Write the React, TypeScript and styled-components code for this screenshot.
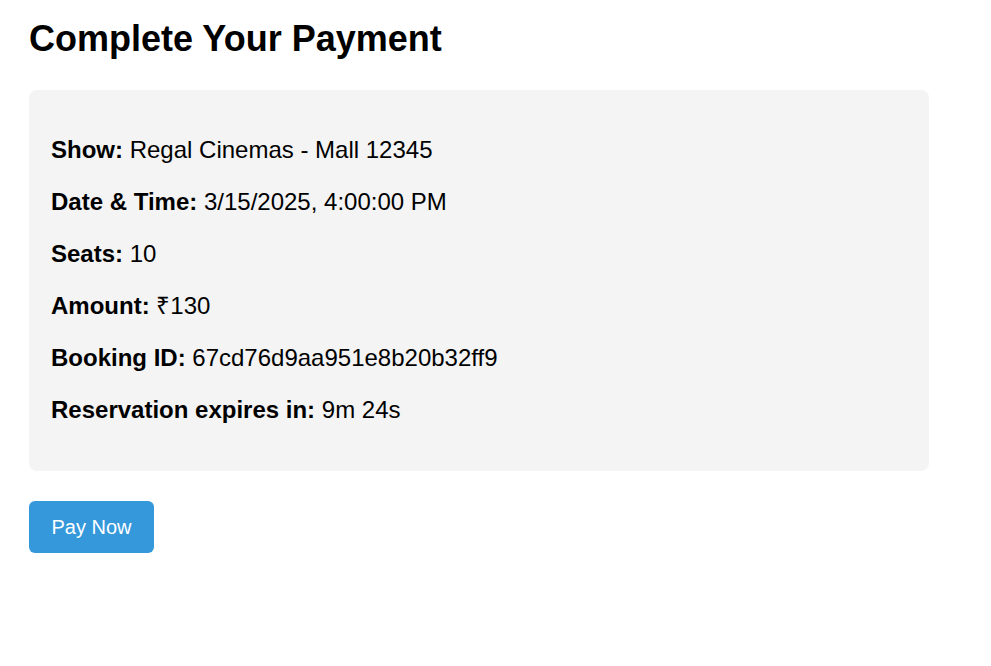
import React from "react";
import styled, { createGlobalStyle } from "styled-components";

const GlobalStyle = createGlobalStyle`
  html, body {
    margin: 0;
    padding: 0;
    background: #ffffff;
    font-family: "Liberation Sans", Arial, sans-serif;
    color: #000000;
  }
`;

const Page = styled.div`
  padding: 0 29px;
  display: flex;
  flex-direction: column;
  align-items: flex-start;
`;

const Title = styled.h1`
  font-size: 36px;
  font-weight: bold;
  margin: 18px 0 30px;
  line-height: 42px;
`;

const Card = styled.section`
  box-sizing: border-box;
  width: 900px;
  background: #f4f4f4;
  border-radius: 8px;
  padding: 24px 22px 25px;
`;

const Row = styled.p`
  margin: 20px 0;
  font-size: 24px;
  line-height: 32px;
`;

const Label = styled.strong`
  font-weight: bold;
`;

const PayButton = styled.button`
  margin-top: 30px;
  width: 125px;
  height: 52px;
  padding: 0;
  border: none;
  border-radius: 6px;
  background: #3498db;
  color: #ffffff;
  font-family: "Liberation Sans", Arial, sans-serif;
  font-size: 20px;
  cursor: pointer;
`;

const rows: [string, string][] = [
  ["Show:", "Regal Cinemas - Mall 12345"],
  ["Date & Time:", "3/15/2025, 4:00:00 PM"],
  ["Seats:", "10"],
  ["Amount:", "₹130"],
  ["Booking ID:", "67cd76d9aa951e8b20b32ff9"],
  ["Reservation expires in:", "9m 24s"],
];

export default function App() {
  return (
    <>
      <GlobalStyle />
      <Page>
        <Title>Complete Your Payment</Title>
        <Card>
          {rows.map(([label, value]) => (
            <Row key={label}>
              <Label>{label}</Label> {value}
            </Row>
          ))}
        </Card>
        <PayButton>Pay Now</PayButton>
      </Page>
    </>
  );
}
